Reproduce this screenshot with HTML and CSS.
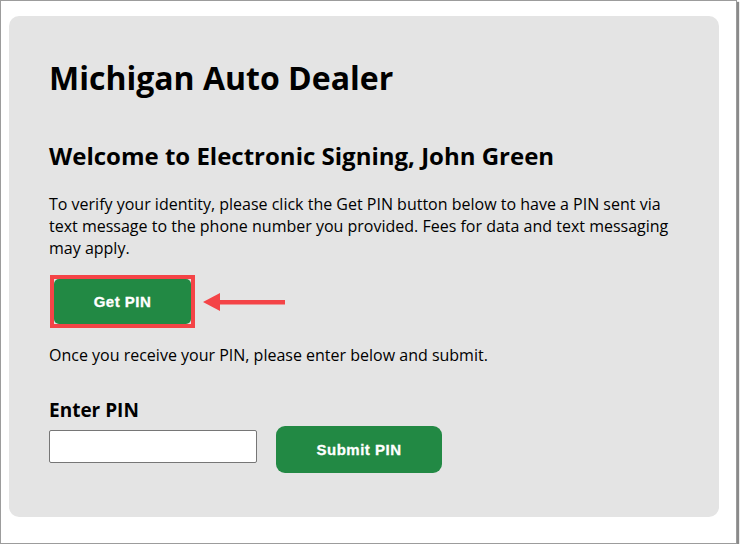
FILE: index.html
```html
<!DOCTYPE html>
<html lang="en">
<head>
    <meta charset="UTF-8">
    <meta name="viewport" content="width=device-width, initial-scale=1.0">
    <title>Michigan Auto Dealer - Electronic Signing</title>
    <link rel="stylesheet" href="styles.css">
</head>
<body>
    <div class="frame">
        <div class="panel">
            <h1>Michigan Auto Dealer</h1>
            <h2>Welcome to Electronic Signing, John Green</h2>
            <p>To verify your identity, please click the Get PIN button below to have a PIN sent via text message to the phone number you provided. Fees for data and text messaging may apply.</p>

            <div class="pin-row">
                <div class="highlight">
                    <button class="btn btn-get">Get PIN</button>
                </div>
                <!-- annotation arrow -->
                <svg class="arrow" width="83" height="20" viewBox="0 0 83 20">
                    <polygon points="0,10 17,1 17,19" fill="#f44447"/>
                    <rect x="16" y="8" width="66" height="4.5" fill="#f44447"/>
                </svg>
            </div>

            <p class="once">Once you receive your PIN, please enter below and submit.</p>

            <label class="label" for="pin">Enter PIN</label>
            <div class="form-row">
                <input class="pin-input" id="pin" type="text">
                <button class="btn btn-submit">Submit PIN</button>
            </div>
        </div>
    </div>
</body>
</html>
```

FILE: styles.css
```css
body {
    margin: 0;
    background: #fff;
    font-family: 'Open Sans', sans-serif;
    color: #000;
}
.frame {
    width: 737px;
    height: 544px;
    border: 1px solid #9c9c9c;
    box-shadow: 2px 2px 1px #8a8a8a;
    background: #fff;
    padding: 15px 0 0 8px;
    box-sizing: border-box;
}
.panel {
    width: 710px;
    height: 501px;
    background: #e4e4e4;
    border-radius: 10px;
    padding: 42px 40px 0;
    box-sizing: border-box;
}
h1 {
    font-size: 32px;
    line-height: 40px;
    font-weight: 700;
    margin: 0 0 42px;
}
h2 {
    font-size: 24px;
    line-height: 32px;
    font-weight: 700;
    margin: 0 0 21px;
}
p {
    font-size: 16px;
    line-height: 22px;
    margin: 0;
}
.pin-row {
    display: flex;
    align-items: center;
    margin: 16px 0;
}
.highlight {
    border: 4px solid #f44447;
    width: 145px;
    height: 53px;
    margin-left: 1px;
    box-sizing: border-box;
}
.btn {
    background: #228944;
    color: #fff;
    border: none;
    font-family: 'Liberation Sans', Arial, sans-serif;
    font-weight: 700;
    font-size: 15px;
    letter-spacing: 0.5px;
    -webkit-text-stroke: 0.3px #fff;
    cursor: pointer;
}
.btn-get {
    width: 137px;
    height: 45px;
    border-radius: 5px;
}
.arrow {
    margin-left: 8px;
}
.label {
    display: block;
    font-size: 19px;
    font-weight: 700;
    line-height: 26px;
    margin-top: 31px;
}
.form-row {
    display: flex;
    align-items: flex-start;
    gap: 19px;
    margin-top: 3px;
}
.pin-input {
    width: 208px;
    height: 33px;
    box-sizing: border-box;
    border: 1px solid #767676;
    border-radius: 2px;
    margin-top: 4px;
    background: #fff;
}
.btn-submit {
    width: 166px;
    height: 47px;
    border-radius: 9px;
}
```
